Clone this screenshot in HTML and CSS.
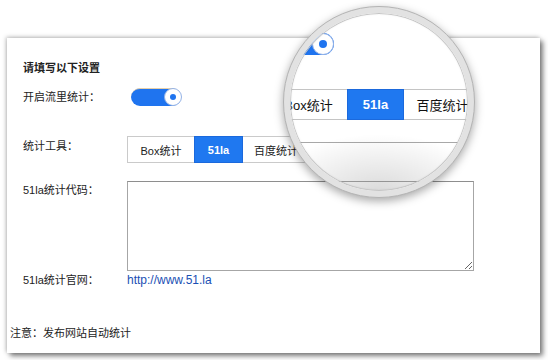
FILE: index.html
```html
<!DOCTYPE html>
<html lang="zh-CN">
<head>
  <meta charset="UTF-8">
  <title>统计设置</title>
  <link rel="stylesheet" href="styles.css">
</head>
<body>

  <div class="panel">
    <h3 class="title">请填写以下设置</h3>
    <div class="form">
      <div class="row row-switch">
        <span class="label">开启流里统计：</span>
        <span class="switch"><span class="knob"></span></span>
      </div>
      <div class="row row-tool">
        <span class="label">统计工具：</span>
        <div class="tabs">
          <span class="tab">Box统计</span>
          <span class="tab active">51la</span>
          <span class="tab">百度统计</span>
        </div>
      </div>
      <div class="row row-code">
        <span class="label">51la统计代码：</span>
        <textarea class="code"></textarea>
      </div>
      <div class="row row-site">
        <span class="label">51la统计官网：</span>
        <a class="link" href="#">http://www.51.la</a>
      </div>
    </div>
    <p class="note">注意：发布网站自动统计</p>
  </div>

  <!-- magnifier over the tool switch -->
  <div class="lens">
    <div class="glass">
      <span class="zoom-switch"><span class="zoom-knob"></span></span>
      <div class="zoom-tabs">
        <span class="zoom-tab wide">Box统计</span>
        <span class="zoom-tab active">51la</span>
        <span class="zoom-tab wide">百度统计</span>
      </div>
      <div class="zoom-line"></div>
      <div class="zoom-line low"></div>
    </div>
  </div>

</body>
</html>
```

FILE: styles.css
```css
* {
  margin: 0;
  padding: 0;
  box-sizing: border-box;
}

body {
  width: 548px;
  height: 360px;
  background: #fff;
  font-family: 'Liberation Sans', 'Noto Sans CJK SC', sans-serif;
  font-size: 11px;
  color: #222;
  overflow: hidden;
  position: relative;
}

.panel {
  margin: 38px 0 0 7px;
  width: 533px;
  height: 315px;
  padding: 22px 0 0 3px;
  background: #fff;
  box-shadow: 3px 3px 5px rgba(0,0,0,0.5), -1px -1px 4px rgba(0,0,0,0.25);
}

.title {
  margin-left: 13px;
  font-size: 11px;
  font-weight: 700;
  line-height: 16px;
}

.form {
  padding-left: 13px;
}

.row {
  display: flex;
  align-items: flex-start;
}

.label {
  width: 104px;
  flex-shrink: 0;
  line-height: 18px;
}

.row-switch {
  margin-top: 12px;
}

.switch {
  position: relative;
  display: block;
  width: 50px;
  height: 18px;
  margin-left: 4px;
  border-radius: 9px;
  background: #1f74ef;
  border-top: 1px solid #e6cfa9;
}

.knob {
  position: absolute;
  right: -1px;
  top: -1px;
  width: 18px;
  height: 18px;
  border-radius: 50%;
  background: #fff;
  border: 1px solid #93b2e6;
  display: flex;
  align-items: center;
  justify-content: center;
}

.knob::after {
  content: '';
  width: 6px;
  height: 6px;
  border-radius: 50%;
  background: #1f74ef;
}

.row-tool {
  margin-top: 30px;
}

.row-tool .label {
  line-height: 20px;
}

.tabs {
  display: flex;
  height: 27px;
  border: 1px solid #cacaca;
}

.tab {
  display: flex;
  align-items: center;
  justify-content: center;
  width: 66px;
  font-size: 11px;
}

.tab + .tab {
  border-left: 1px solid #cacaca;
}

.tab.active {
  width: 49px;
  margin: -1px 0;
  background: #1f78f0;
  border: 1px solid #1b69dc;
  color: #fff;
  font-weight: 700;
}

.tab.active + .tab {
  border-left: none;
}

.row-code {
  margin-top: 18px;
}

.code {
  width: 347px;
  height: 90px;
  border: 1px solid #a6a6a6;
  border-top-color: #8e8e8e;
  font-family: inherit;
}

.row-site .link {
  line-height: 18px;
  font-size: 12px;
  color: #1a4fb4;
  text-decoration: none;
}

.note {
  margin-top: 35px;
  line-height: 18px;
}

/* Magnifier */
.lens {
  position: absolute;
  left: 283px;
  top: 6px;
  width: 192px;
  height: 192px;
  border-radius: 50%;
  border: 1px solid #b4b4b4;
  background: #e2e2e2;
  box-shadow: 0 3px 10px rgba(0,0,0,0.35);
  z-index: 2;
}

.glass {
  position: absolute;
  left: 6px;
  top: 6px;
  width: 178px;
  height: 178px;
  border-radius: 50%;
  overflow: hidden;
  background: #fff;
}

.glass::after {
  content: '';
  position: absolute;
  inset: 0;
  border-radius: 50%;
  background: radial-gradient(ellipse 62% 32% at 50% 100%, rgba(0,0,0,0.14), rgba(0,0,0,0));
  box-shadow: inset 0 0 0 1px #c6c6c6, inset 0 0 3px rgba(0,0,0,0.15);
}

.zoom-switch {
  position: absolute;
  left: -40px;
  top: 20px;
  width: 84px;
  height: 22px;
  border-radius: 11px;
  background: #1f74ef;
}

.zoom-knob {
  position: absolute;
  right: 0;
  top: 0;
  width: 22px;
  height: 22px;
  border-radius: 50%;
  background: #fff;
  border: 1px solid #93b2e6;
  display: flex;
  align-items: center;
  justify-content: center;
}

.zoom-knob::after {
  content: '';
  width: 8px;
  height: 8px;
  border-radius: 50%;
  background: #1f74ef;
}

.zoom-tabs {
  position: absolute;
  left: -20px;
  top: 76px;
  display: flex;
  height: 31px;
  border-top: 1px solid #c4c4c4;
  border-bottom: 1px solid #c4c4c4;
}

.zoom-tab {
  display: flex;
  align-items: center;
  justify-content: center;
  width: 57px;
  font-size: 13px;
  color: #111;
}

.zoom-tab.wide {
  width: 77px;
}

.zoom-tab.active {
  margin: -1px 0;
  background: #1f78f0;
  border: 1px solid #1b69dc;
  color: #fff;
  font-weight: 700;
}

.zoom-line {
  position: absolute;
  left: 0;
  top: 129px;
  width: 168px;
  height: 1px;
  background: #a8a8a8;
}

.zoom-line.low {
  top: 168px;
  width: 178px;
}
```
